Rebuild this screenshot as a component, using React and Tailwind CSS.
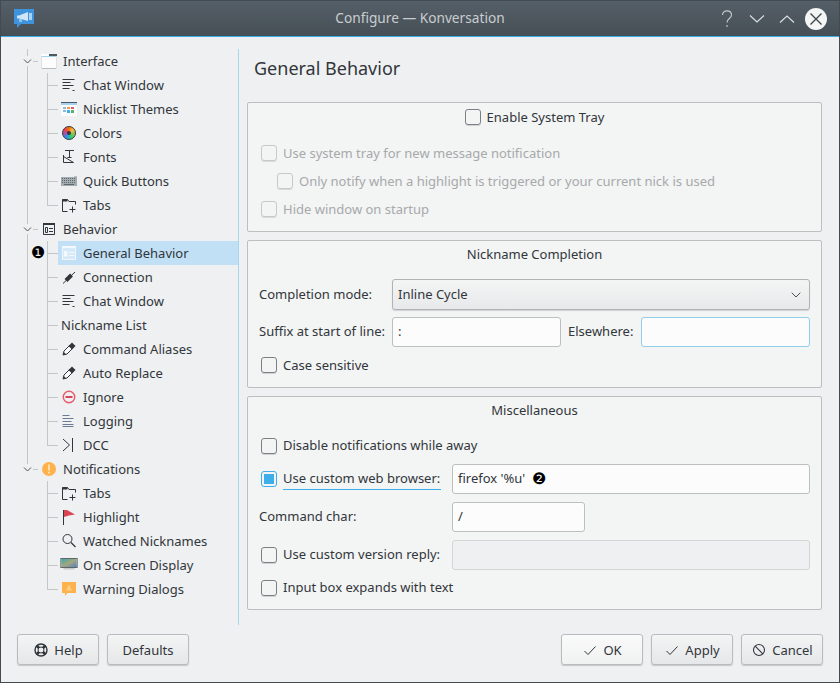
import { ChevronDown } from 'lucide-react'

const ink = '#31363b'

function Ic({ children, cls = '' }) {
  return (
    <svg width="16" height="16" viewBox="0 0 16 16" fill="none" className={`shrink-0 ${cls}`}>
      {children}
    </svg>
  )
}

const icons = {
  iface: (
    <Ic>
      <path d="M0 1h16v15H0z" fill="#fcfcfc" />
      <path d="M0 3h16v1H0z" fill="#a5d3ee" />
      <path d="M8 1h8v2H8z" fill="#4d5a62" />
      <path d="M0 15.5h16" stroke="#b8bcbf" />
      <path d="M.5 3v13M15.5 3v13" stroke="#dfe1e2" />
    </Ic>
  ),
  lines: (
    <Ic>
      <path d="M1.5 2.5h12M1.5 5.5h8M1.5 8.5h11M1.5 11.5h7M11.5 13.5h2" stroke={ink} />
    </Ic>
  ),
  nick: (
    <Ic>
      <path d="M0 1h16v14H0z" fill="#fcfcfc" />
      <path d="M0 1h16v1H0z" fill="#4d5a62" />
      <path d="M0 2h16v2H0z" fill="#a5d3ee" />
      <path d="M2 6h3v2H2zM2 9h3v2H2z" fill="#8fb8dc" />
      <path d="M6 6h3v2H6z" fill="#e9a03d" />
      <path d="M10 6h3v2h-3z" fill="#e0566b" />
      <path d="M6 9h3v3H6z" fill="#3daee9" />
      <path d="M10 9h3v3h-3z" fill="#58b368" />
    </Ic>
  ),
  colors: (
    <div className="w-[14px] h-[14px] mx-px shrink-0 rounded-full border-[1.5px] border-[#31363b] bg-[conic-gradient(#f67400,#fdbc4b,#8bc34a,#2ecc71,#1d99f3,#9b59b6,#e93d58,#f67400)] flex items-center justify-center">
      <div className="w-[4px] h-[4px] rounded-full bg-[#31363b]" />
    </div>
  ),
  fonts: (
    <Ic>
      <path d="M4 1.5h9M8.5 1.5v7M6.5 8.5h4" stroke={ink} />
      <path d="M2.5 6v7.5h10L2.5 7.5" stroke={ink} />
    </Ic>
  ),
  keys: (
    <Ic>
      <path d="M0 4h16v9H0z" fill="#a4acb0" />
      <path d="M1 5.5h14M1 7.5h14M1 9.5h14" stroke="#5d6a72" strokeDasharray="1 1" />
      <path d="M3 11.5h10" stroke="#5d6a72" />
      <path d="M13 3h3v1h-3z" fill="#b8c0c4" />
    </Ic>
  ),
  folderPlus: (
    <Ic>
      <path d="M6.5 14.5h-5v-12h5l1.5 2h6.5v3" stroke={ink} />
      <path d="M1.5 2.5h5v2h-5z" fill={ink} />
      <path d="M11.5 9.5v6M8.5 12.5h6" stroke={ink} />
    </Ic>
  ),
  behavior: (
    <Ic>
      <path d="M1.5 1.5h11v11h-11z" transform="translate(1 1)" stroke={ink} />
      <path d="M2 2h12v2H2z" fill={ink} />
      <path d="M4.5 6.5h2v5h-2z" stroke={ink} />
      <path d="M8 7.5h4M8 10.5h4" stroke={ink} />
    </Ic>
  ),
  behaviorSel: (
    <Ic>
      <path d="M1.5 1.5h13v13h-13z" fill="#d5e9f8" stroke="#f0f7fc" />
      <path d="M1 1h14v2H1z" fill="#f4f9fd" />
      <path d="M3 6h3.5v5.5H3z" fill="#f4f9fd" />
      <path d="M8 7.5h5.5M8 10.5h5.5" stroke="#f4f9fd" />
    </Ic>
  ),
  plug: (
    <Ic>
      <path d="M2 14.5L14 3" stroke={ink} />
      <path d="M5 11.5l5.5-5.5" stroke={ink} strokeWidth="4" />
    </Ic>
  ),
  pencil: (
    <Ic>
      <path d="M2 14l1-4 6-6 3 3-6 6z" fill="#fcfcfc" stroke={ink} />
      <path d="M7.5 5l3.5-3.5 3.5 3.5-3.5 3.5z" fill={ink} />
      <path d="M2 14l.8-3 2.2 2.2z" fill={ink} />
    </Ic>
  ),
  ignore: (
    <Ic>
      <circle cx="8" cy="8" r="5.75" stroke="#e9596e" strokeWidth="1.4" />
      <path d="M4.5 7h7v2h-7z" fill="#da4453" />
    </Ic>
  ),
  log: (
    <Ic>
      <path d="M1.5 2.5h7M1.5 5.5h11M1.5 8.5h9M1.5 11.5h11M1.5 13.5h11" stroke="#6c7a92" />
    </Ic>
  ),
  dcc: (
    <Ic>
      <path d="M2 2l6.5 6L2 14" stroke={ink} />
      <path d="M11.5 1v14" stroke={ink} />
    </Ic>
  ),
  notify: (
    <Ic>
      <circle cx="8" cy="8" r="7" fill="#fdb24b" />
      <path d="M7.2 3.5h1.6v6H7.2zM7.2 10.8h1.6v1.6H7.2z" fill="#ffe9c4" />
    </Ic>
  ),
  flag: (
    <Ic>
      <path d="M2.5 1v15" stroke={ink} />
      <path d="M3 1h3l8 4.5-6 1L3 8z" fill="#da4453" />
    </Ic>
  ),
  search: (
    <Ic>
      <circle cx="6.5" cy="6" r="4.5" stroke={ink} />
      <path d="M10 9.5l4.5 4.5" stroke={ink} strokeWidth="1.2" />
    </Ic>
  ),
  osd: (
    <svg width="16" height="16" viewBox="0 0 16 16" className="shrink-0 scale-x-[1.1]">
      <defs>
        <linearGradient id="osd" x1="0" y1="0" x2="1" y2="1">
          <stop offset="0" stopColor="#39a9a9" />
          <stop offset="0.5" stopColor="#a3a77d" />
          <stop offset="1" stopColor="#5a7fc0" />
        </linearGradient>
      </defs>
      <path d="M0 1h16v1H0zM0 2h1v8H0zM15 2h1v8h-1zM0 10h16v1H0z" fill="#5b666d" />
      <path d="M1 2h14v8H1z" fill="url(#osd)" />
      <path d="M3 11h10v1.5H3z" fill="#c4c9cc" />
    </svg>
  ),
  warn: (
    <Ic>
      <path d="M1 1h14v11H6.5L4 15v-3H1z" fill="#fdb24b" />
      <path d="M8 3.5l3 6H5z" fill="#fbd084" />
    </Ic>
  ),
}

const tree = [
  { label: 'Interface', icon: 'iface', top: true },
  { label: 'Chat Window', icon: 'lines' },
  { label: 'Nicklist Themes', icon: 'nick' },
  { label: 'Colors', icon: 'colors' },
  { label: 'Fonts', icon: 'fonts' },
  { label: 'Quick Buttons', icon: 'keys' },
  { label: 'Tabs', icon: 'folderPlus', last: true },
  { label: 'Behavior', icon: 'behavior', top: true },
  { label: 'General Behavior', icon: 'behaviorSel', selected: true },
  { label: 'Connection', icon: 'plug' },
  { label: 'Chat Window', icon: 'lines' },
  { label: 'Nickname List' },
  { label: 'Command Aliases', icon: 'pencil' },
  { label: 'Auto Replace', icon: 'pencil' },
  { label: 'Ignore', icon: 'ignore' },
  { label: 'Logging', icon: 'log' },
  { label: 'DCC', icon: 'dcc', last: true },
  { label: 'Notifications', icon: 'notify', top: true, end: true },
  { label: 'Tabs', icon: 'folderPlus', tail: true },
  { label: 'Highlight', icon: 'flag', tail: true },
  { label: 'Watched Nicknames', icon: 'search', tail: true },
  { label: 'On Screen Display', icon: 'osd', tail: true },
  { label: 'Warning Dialogs', icon: 'warn', tail: true, last: true },
]

function TreeRow({ row }) {
  const guide = '#c4c6c8'
  if (row.top) {
    return (
      <div className="h-6 flex items-center">
        <svg width="24" height="24" fill="none" className="shrink-0">
          <path d={row.end ? 'M10.5 0v7' : 'M10.5 0v7M10.5 17v7'} stroke={guide} />
          <path d="M16 12.5h5" stroke={guide} />
          <path d="M7 10.5l3.5 3.5 3.5-3.5" stroke="#4d5257" />
        </svg>
        {icons[row.icon]}
        <span className="ml-[6px] pt-[2px]">{row.label}</span>
      </div>
    )
  }
  return (
    <div className="h-6 flex items-center relative">
      <svg width="41" height="24" fill="none" className="shrink-0">
        {!row.tail && <path d="M10.5 0v24" stroke={guide} />}
        <path d={row.last ? 'M30.5 0v12.5' : 'M30.5 0v24'} stroke={guide} />
        <path d="M30 12.5h11" stroke={guide} />
      </svg>
      <div className={`flex-1 h-6 flex items-center pl-[3px] ${row.selected ? 'bg-[#c2e0f5]' : ''}`}>
        {row.icon && <span className="mr-[6px] w-4 flex">{icons[row.icon]}</span>}
        <span className="pt-[2px]">{row.label}</span>
      </div>
      {row.selected && (
        <span className="absolute left-[14px] top-0 h-6 leading-6 text-[16px] text-black font-['DejaVu_Sans']">❶</span>
      )}
    </div>
  )
}

function Check({ on, off }) {
  const border = off ? 'border-[#c6c8ca] shadow-[0_1px_0_#d8dadb]' : on ? 'border-[#3daee9]' : 'border-[#7c8085] shadow-[0_1px_0_#cfd1d2]'
  return (
    <span className={`w-4 h-4 shrink-0 rounded-[3px] border flex items-center justify-center ${border}`}>
      {on && <span className="w-[10px] h-[10px] bg-[#3daee9]" />}
    </span>
  )
}

function CheckRow({ children, on, off, cls = 'ml-[2px]', nudge = 'pt-[2px]' }) {
  return (
    <div className={`h-6 flex items-center gap-[6px] ${off ? 'text-[#a7a9ab]' : ''} ${cls}`}>
      <Check on={on} off={off} />
      <span className={nudge}>{children}</span>
    </div>
  )
}

function Field({ children, cls = '', focus }) {
  return (
    <div className={`h-[30px] rounded-[3px] border bg-[#fcfcfc] px-[5px] flex items-center ${focus ? 'border-[#93cee9]' : 'border-[#bcbec0]'} ${cls}`}>
      {children}
    </div>
  )
}

function Group({ title, h, children }) {
  return (
    <div className={`rounded-[2px] border border-[#bcbebf] bg-[#f3f4f4] px-[11px] ${h}`}>
      {title && <div className="h-6 mt-[2px] flex items-center justify-center">{title}</div>}
      {children}
    </div>
  )
}

function Btn({ icon, label, light }) {
  const bg = light
    ? 'bg-gradient-to-b from-[#fafafa] to-[#f0f1f1]'
    : 'bg-gradient-to-b from-[#f3f4f4] to-[#e6e7e8]'
  return (
    <div className={`w-[82px] h-[31px] rounded-[3px] border border-[#b9bbbd] shadow-[0_1px_1px_#c4c6c8] flex items-center justify-center gap-[5px] ${bg}`}>
      {icon}
      <span className="pt-[2px]">{label}</span>
    </div>
  )
}

export default function App() {
  return (
    <div className="w-[840px] h-[683px] flex flex-col border border-[#434b51] bg-[#eff0f1] text-[13px] text-[#31363b] font-['Noto_Sans',sans-serif] overflow-hidden">
      <div className="h-[35px] shrink-0 flex items-center relative bg-gradient-to-b from-[#555f67] to-[#464f56] text-[#c9cdd0]">
        <svg width="20" height="20" viewBox="0 0 20 20" className="ml-[13px] shrink-0">
          <path d="M0 0h20v15H7l-4 4v-4H0z" fill="#3f93dc" />
          <path d="M3 6.5h2l9-3.5v9L5 9.5H3z" fill="#cfe6f8" />
          <path d="M15 4h3v7h-3z" fill="#a9d4f3" />
          <path d="M5 10h3v3H5z" fill="#8cc3ee" />
        </svg>
        <span className="absolute left-0 right-0 text-center text-[13.7px]">Configure — Konversation</span>
        <div className="ml-auto flex items-center">
          <svg width="16" height="18" viewBox="0 0 16 18" className="mr-[14px]">
            <path d="M3.5 5c0-5.5 9-5.5 9 0 0 3.5-4.5 3.5-4.5 7.5M8 15v2" stroke="#c9cdd0" strokeWidth="1.1" fill="none" />
          </svg>
          <svg width="16" height="10" viewBox="0 0 16 10" className="mr-[14px]">
            <path d="M1 1.5l7 6.5 7-6.5" stroke="#dfe2e4" strokeWidth="1.1" fill="none" />
          </svg>
          <svg width="16" height="10" viewBox="0 0 16 10" className="mr-[10px]">
            <path d="M1 8.5l7-6.5 7 6.5" stroke="#dfe2e4" strokeWidth="1.1" fill="none" />
          </svg>
          <svg width="22" height="22" viewBox="0 0 22 22" className="mr-[12px]">
            <circle cx="11" cy="11" r="11" fill="#f4f5f5" />
            <path d="M5.5 5.5l11 11M16.5 5.5l-11 11" stroke="#3f474d" strokeWidth="1.4" />
          </svg>
        </div>
      </div>
      <div className="h-px shrink-0 bg-[#3daee9]" />

      <div className="flex pt-3 pl-4 pr-[17px]">
        <div className="w-[222px] h-[576px] shrink-0 border-r border-[#a8d6ee]">
          {tree.map((row, i) => <TreeRow key={i} row={row} />)}
        </div>
        <div className="flex-1 pl-2">
          <div className="h-[53px] pl-[7px] pt-[4px] text-[18px] leading-[30px]">General Behavior</div>

          <Group h="h-[130px]" title={<CheckRow cls="">Enable System Tray</CheckRow>}>
            <div className="mt-3 flex flex-col gap-1">
              <CheckRow off>Use system tray for new message notification</CheckRow>
              <CheckRow off cls="ml-[18px]">Only notify when a highlight is triggered or your current nick is used</CheckRow>
              <CheckRow off>Hide window on startup</CheckRow>
            </div>
          </Group>

          <div className="h-2" />
          <Group h="h-[148px]" title="Nickname Completion">
            <div className="mt-[12px] flex items-center">
              <span className="w-[133px]">Completion mode:</span>
              <div className="flex-1 h-[31px] rounded-[3px] border border-[#b0b2b4] shadow-[0_1px_1px_#cfd1d2] bg-gradient-to-b from-[#f3f4f4] to-[#e8e9ea] flex items-center justify-between pl-[5px] pr-[5px]">
                <span>Inline Cycle</span>
                <ChevronDown size={16} strokeWidth={1.3} />
              </div>
            </div>
            <div className="mt-[7px] flex items-center">
              <span className="w-[133px]">Suffix at start of line:</span>
              <Field cls="w-[169px]">:</Field>
              <span className="ml-[7px] w-[73px]">Elsewhere:</span>
              <Field cls="flex-1" focus />
            </div>
            <div className="mt-[6px]">
              <CheckRow>Case sensitive</CheckRow>
            </div>
          </Group>

          <div className="h-2" />
          <Group h="h-[214px]" title="Miscellaneous">
            <div className="mt-[11px]">
              <CheckRow nudge="">Disable notifications while away</CheckRow>
            </div>
            <div className="mt-[6px] flex items-center">
              <div className="w-[193px]">
                <CheckRow on nudge="">
                  <span className="block border-b border-[#3daee9] pb-[1px] leading-[20px] w-[158px]">Use custom web browser:</span>
                </CheckRow>
              </div>
              <Field cls="flex-1">
                <span className="whitespace-pre">firefox '%u'  </span>
                <span className="text-[16px] leading-none text-black font-['DejaVu_Sans']">❷</span>
              </Field>
            </div>
            <div className="mt-2 flex items-center">
              <span className="w-[193px]">Command char:</span>
              <Field cls="w-[133px]">/</Field>
            </div>
            <div className="mt-2 flex items-center">
              <div className="w-[193px]">
                <CheckRow nudge="">Use custom version reply:</CheckRow>
              </div>
              <div className="flex-1 h-[30px] rounded-[3px] border border-[#d3d5d6] bg-[#eff0f1]" />
            </div>
            <div className="mt-[6px]">
              <CheckRow nudge="">Input box expands with text</CheckRow>
            </div>
          </Group>
        </div>
      </div>

      <div className="mt-[9px] pl-4 pr-[16px] flex gap-2">
        <Btn label="Help" icon={
          <svg width="16" height="16" viewBox="0 0 16 16" fill="none" stroke="#31363b">
            <circle cx="8" cy="8" r="6" strokeWidth="1.4" />
            <circle cx="8" cy="8" r="3" />
            <path d="M3.5 3.5l2.5 2.5M12.5 3.5L10 6M3.5 12.5L6 10M12.5 12.5L10 10" strokeWidth="2.6" />
          </svg>
        } />
        <Btn label="Defaults" />
        <div className="flex-1" />
        <Btn light label="OK" icon={
          <svg width="16" height="16" viewBox="0 0 16 16" fill="none" stroke="#31363b"><path d="M2.5 9l3.5 3.5 7.5-8" /></svg>
        } />
        <Btn label="Apply" icon={
          <svg width="16" height="16" viewBox="0 0 16 16" fill="none" stroke="#31363b"><path d="M2.5 9l3.5 3.5 7.5-8" /></svg>
        } />
        <Btn label="Cancel" icon={
          <svg width="16" height="16" viewBox="0 0 16 16" fill="none" stroke="#31363b"><circle cx="8" cy="8" r="5.5" strokeWidth="1.1" /><path d="M4.2 4.2l7.6 7.6" strokeWidth="1.1" /></svg>
        } />
      </div>
    </div>
  )
}
